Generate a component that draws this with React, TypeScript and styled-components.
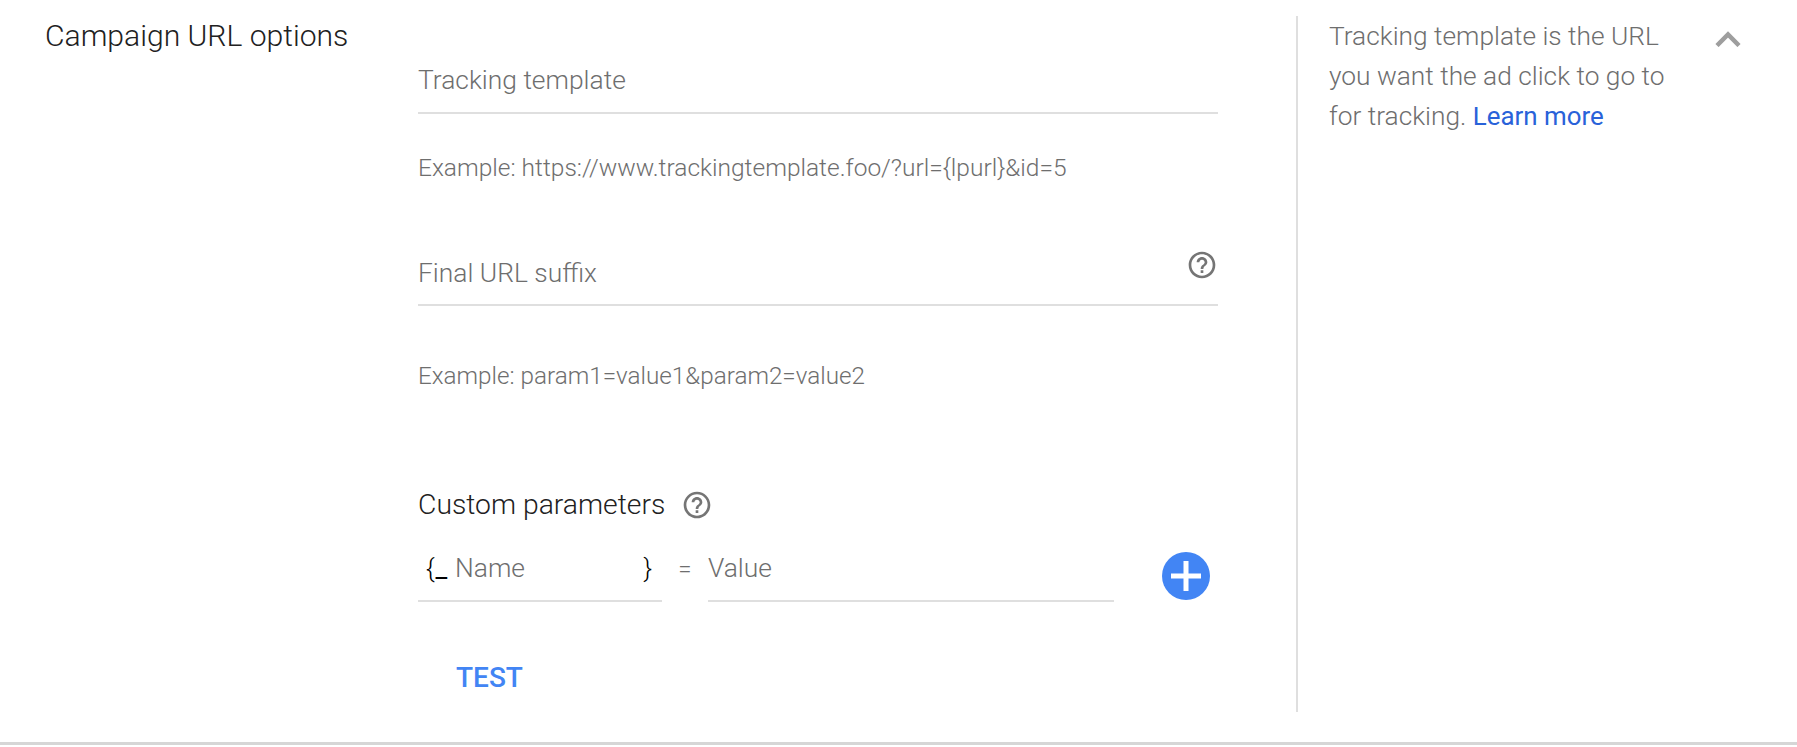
import styled, { createGlobalStyle } from 'styled-components';

const GlobalStyle = createGlobalStyle`
  html, body {
    margin: 0;
    padding: 0;
    background: #ffffff;
    overflow: hidden;
  }
  body {
    font-family: Roboto, "Liberation Sans", sans-serif;
  }
`;

const HelpIcon = () => (
  <svg width="32" height="32" viewBox="0 0 24 24" fill="#757575">
    <path d="M11 18h2v-2h-2v2zm1-16C6.48 2 2 6.48 2 12s4.48 10 10 10 10-4.480 10-10S17.520 2 12 2zm0 18c-4.410 0-8-3.590-8-8s3.590-8 8-8 8 3.590 8 8-3.590 8-8 8zm0-14c-2.210 0-4 1.790-4 4h2c0-1.100.9-2 2-2s2 .9 2 2c0 2-3 1.750-3 5h2c0-2.250 3-2.500 3-5 0-2.210-1.790-4-4-4z" />
  </svg>
);

const App = () => {
  return (
    <>
      <GlobalStyle />
      <Section>
        <TitleColumn>
          <Title>Campaign URL options</Title>
        </TitleColumn>
        <FormColumn>
          <Field>
            <FieldLabel>Tracking template</FieldLabel>
          </Field>
          <Hint>Example: https://www.trackingtemplate.foo/?url={'{lpurl}'}&amp;id=5</Hint>
          <Field className="second">
            <FieldLabel>Final URL suffix</FieldLabel>
            <FieldHelp>
              <HelpIcon />
            </FieldHelp>
          </Field>
          <Hint className="second">Example: param1=value1&amp;param2=value2</Hint>
          <ParamsHeading>
            <span>Custom parameters</span>
            <HelpIcon />
          </ParamsHeading>
          <ParamsRow>
            <NameInput>
              <Brace>
                {'{'}
                <Underscore>_</Underscore>
              </Brace>
              <FieldLabel>Name</FieldLabel>
              <ClosingBrace>{'}'}</ClosingBrace>
            </NameInput>
            <Equals>=</Equals>
            <ValueInput>
              <FieldLabel>Value</FieldLabel>
            </ValueInput>
            <AddButton aria-label="Add parameter">
              <svg width="30" height="30" viewBox="0 0 30 30" fill="#ffffff">
                <rect x="0" y="12.5" width="30" height="5" />
                <rect x="12.5" y="0" width="5" height="30" />
              </svg>
            </AddButton>
          </ParamsRow>
          <TestButton>TEST</TestButton>
        </FormColumn>
        <Aside>
          <AsideText>
            Tracking template is the URL you want the ad click to go to for tracking.{' '}
            <LearnMore href="#">Learn more</LearnMore>
          </AsideText>
          <Collapse aria-label="Collapse">
            <svg width="26" height="16" viewBox="0 0 26 16" fill="none" stroke="#9e9e9e" strokeWidth="4.500">
              <path d="M2 14.500 L13 3.500 L24 14.500" />
            </svg>
          </Collapse>
        </Aside>
      </Section>
    </>
  );
};

export default App;

const Section = styled.section`
  display: grid;
  grid-template-columns: 418px 878px 1fr;
  height: 745px;
  box-sizing: border-box;
  padding-top: 16px;
  padding-bottom: 30px;
  border-bottom: 3px solid #d6d6d6;
`;

const TitleColumn = styled.div`
  padding-left: 45px;
`;

const Title = styled.h2`
  margin: 0;
  font-size: 30.1px;
  font-weight: 300;
  line-height: 40px;
  color: #212121;
`;

const FormColumn = styled.div`
  display: flex;
  flex-direction: column;
  align-items: flex-start;
  padding-top: 40px;
`;

const Field = styled.div`
  width: 800px;
  height: 58px;
  box-sizing: border-box;
  display: flex;
  align-items: center;
  justify-content: space-between;
  border-bottom: 2px solid #dfdfdf;
  padding-bottom: 8px;

  &.second {
    margin-top: 46px;
    height: 77px;
    padding-top: 18px;
    padding-bottom: 6px;
  }
`;

const FieldLabel = styled.span`
  font-size: 26.4px;
  font-weight: 300;
  color: #6e6e6e;
`;

const FieldHelp = styled.span`
  display: flex;
  margin-top: -16px;
`;

const Hint = styled.div`
  margin-top: 39px;
  font-size: 24.5px;
  font-weight: 300;
  line-height: 30px;
  color: #6e6e6e;

  &.second {
    margin-top: 55px;
    font-size: 24.25px;
  }
`;

const ParamsHeading = styled.div`
  margin-top: 94px;
  display: flex;
  align-items: center;
  gap: 16px;
  font-size: 28.3px;
  font-weight: 300;
  line-height: 40px;
  color: #212121;
`;

const ParamsRow = styled.div`
  margin-top: 21px;
  width: 800px;
  display: flex;
  align-items: flex-start;
`;

const NameInput = styled.div`
  width: 244px;
  height: 56px;
  box-sizing: border-box;
  display: flex;
  align-items: center;
  padding: 0 10px 10px 8px;
  border-bottom: 2px solid #dfdfdf;
  color: #000000;
`;

const Brace = styled.span`
  font-size: 26px;
  font-weight: 300;
  width: 29px;
`;

const Underscore = styled.span`
  margin-left: 1px;
  font-weight: 400;
`;

const ClosingBrace = styled.span`
  margin-left: auto;
  font-size: 26px;
  font-weight: 300;
`;

const Equals = styled.span`
  width: 46px;
  text-align: center;
  font-size: 24px;
  font-weight: 300;
  line-height: 46px;
  color: #6e6e6e;
`;

const ValueInput = styled.div`
  width: 406px;
  height: 56px;
  box-sizing: border-box;
  display: flex;
  align-items: center;
  padding-bottom: 10px;
  border-bottom: 2px solid #dfdfdf;
`;

const AddButton = styled.button`
  width: 48px;
  height: 48px;
  margin-left: 48px;
  margin-top: 6px;
  padding: 0;
  border: none;
  border-radius: 50%;
  background: #4285f4;
  display: flex;
  align-items: center;
  justify-content: center;
`;

const TestButton = styled.button`
  margin-top: 58px;
  margin-left: 38px;
  padding: 0;
  border: none;
  background: transparent;
  font-family: inherit;
  font-size: 28px;
  font-weight: 500;
  line-height: 36px;
  color: #4285f4;
`;

const Aside = styled.aside`
  border-left: 2px solid #dfdfdf;
  padding-left: 31px;
  padding-right: 56px;
  display: flex;
  justify-content: space-between;
  align-items: flex-start;
`;

const AsideText = styled.p`
  margin: 0;
  width: 345px;
  font-size: 26.3px;
  font-weight: 300;
  line-height: 40px;
  color: #6e6e6e;
`;

const LearnMore = styled.a`
  color: #2962d9;
  font-size: 25.9px;
  font-weight: 400;
  text-decoration: none;
`;

const Collapse = styled.button`
  margin-top: 15px;
  padding: 0;
  border: none;
  background: transparent;
  display: flex;
`;
